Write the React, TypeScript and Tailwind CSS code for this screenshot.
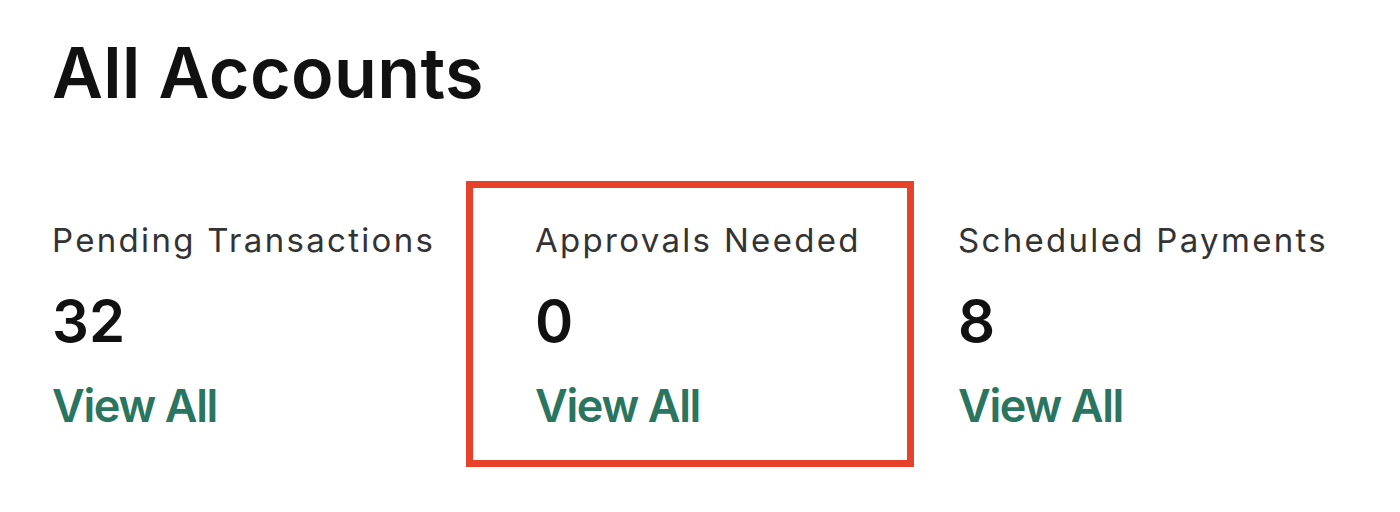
const STATS = [
  { label: "Pending Transactions", value: "32" },
  { label: "Approvals Needed", value: "0", highlight: true },
  { label: "Scheduled Payments", value: "8" },
];

type StatProps = {
  label: string;
  value: string;
};

const Stat = (props: StatProps) => {
  return (
    <div className="flex flex-col">
      <p className="text-[33px] leading-none tracking-[0.07em] text-[#333333]">{props.label}</p>
      <p className="mt-[35px] text-[58px] leading-none font-semibold text-[#111111]">{props.value}</p>
      <a href="#" className="mt-[33px] text-[45px] leading-none font-semibold tracking-[-0.03em] text-[#2a7560]">
        View All
      </a>
    </div>
  );
};

export default function App() {
  return (
    <div className="min-h-[512px] bg-white pl-[52px] pt-[38px] font-['Inter',sans-serif]">
      <h1 className="text-[70px] leading-none font-semibold tracking-[0.005em] text-[#111111]">All Accounts</h1>
      <div className="mt-[73px] flex items-start">
        <div className="w-[414px] pt-[43px]">
          <Stat {...STATS[0]} />
        </div>
        <div className="w-[448px] border-[7px] border-[#e5412b] pt-[36px] pb-[32px] pl-[62px]">
          <Stat {...STATS[1]} />
        </div>
        <div className="pl-[44px] pt-[43px]">
          <Stat {...STATS[2]} />
        </div>
      </div>
    </div>
  );
}
